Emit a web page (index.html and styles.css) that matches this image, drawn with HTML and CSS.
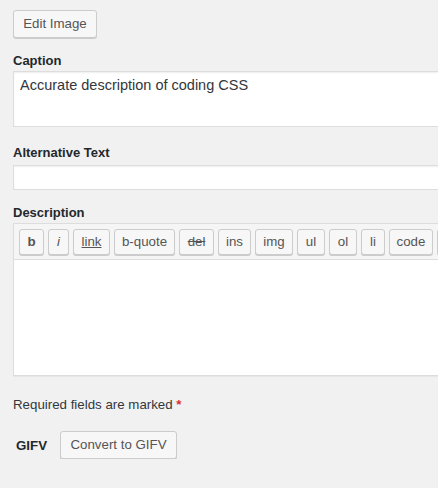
FILE: index.html
```html
<!DOCTYPE html>
<html>
<head>
<meta charset="utf-8">
<link rel="stylesheet" href="styles.css">
</head>
<body>
<div class="page">
  <button class="btn edit-btn">Edit Image</button>

  <div class="field field-caption">
    <label class="label">Caption</label>
    <div class="textarea caption">Accurate description of coding CSS</div>
  </div>

  <div class="field field-alt">
    <label class="label">Alternative Text</label>
    <div class="input"></div>
  </div>

  <div class="field field-desc">
    <label class="label">Description</label>
    <div class="editor">
      <div class="toolbar">
        <span class="qt w-b b">b</span>
        <span class="qt w-i i">i</span>
        <span class="qt w-link link">link</span>
        <span class="qt w-bq">b-quote</span>
        <span class="qt w-del del">del</span>
        <span class="qt w-ins">ins</span>
        <span class="qt w-img">img</span>
        <span class="qt w-ul">ul</span>
        <span class="qt w-ol">ol</span>
        <span class="qt w-li">li</span>
        <span class="qt w-code">code</span>
        <span class="qt w-more"></span>
      </div>
      <div class="editor-body"></div>
    </div>
  </div>

  <p class="required">Required fields are marked <span class="star">*</span></p>

  <div class="gifv">
    <span class="gifv-label">GIFV</span>
    <button class="btn convert-btn">Convert to GIFV</button>
  </div>
</div>
</body>
</html>
```

FILE: styles.css
```css
html, body {
  margin: 0;
  padding: 0;
  background: #f1f1f1;
  overflow: hidden;
}
body {
  font-family: "Liberation Sans", Arial, sans-serif;
  color: #32373c;
  font-size: 13.3px;
}
.page {
  padding: 10px 0 0 13px;
  width: 480px;
}
.btn {
  font-family: inherit;
  font-size: 13.3px;
  color: #555;
  background: #f7f7f7;
  border: 1px solid #cccccc;
  border-radius: 3px;
  box-shadow: 0 1px 0 #cccccc;
  padding: 0;
  height: 28px;
  line-height: 26px;
  cursor: pointer;
  display: block;
  text-align: center;
}
.edit-btn {
  width: 84px;
}
.label {
  display: block;
  font-weight: bold;
  font-size: 13px;
  line-height: 16px;
  color: #23282d;
}
.field-caption {
  margin-top: 15px;
}
.field-caption .label {
  margin-bottom: 2px;
}
.field-alt {
  margin-top: 18px;
}
.field-alt .label {
  margin-bottom: 4px;
}
.field-desc {
  margin-top: 15px;
}
.field-desc .label {
  margin-bottom: 2px;
}
.textarea, .input {
  background: #fff;
  border: 1px solid #dddddd;
  box-shadow: inset 0 1px 2px rgba(0,0,0,0.07);
  box-sizing: border-box;
}
.caption {
  height: 56px;
  padding: 4px 6px;
  font-size: 14.5px;
  line-height: 18px;
  color: #32373c;
}
.input {
  height: 25px;
}
.editor {
  border: 1px solid #dddddd;
  border-right: none;
  box-shadow: 0 1px 1px rgba(0,0,0,0.04);
  background: #fff;
}
.toolbar {
  background: #f5f5f5;
  display: flex;
  gap: 4px;
  padding: 5px 0 4px 5px;
  border-bottom: 1px solid #dddddd;
  white-space: nowrap;
  overflow: hidden;
}
.qt {
  flex: none;
  box-sizing: border-box;
  height: 26px;
  line-height: 24px;
  padding: 0;
  text-align: center;
  font-size: 13.3px;
  color: #555;
  background: #f7f7f7;
  border: 1px solid #cccccc;
  border-radius: 3px;
  box-shadow: 0 1px 0 #cccccc;
}
.qt.b { font-weight: bold; }
.qt.i { font-style: italic; }
.qt.link { text-decoration: underline; }
.qt.del { text-decoration: line-through; }
.w-b { width: 25px; }
.w-i { width: 21px; }
.w-link { width: 37px; }
.w-bq { width: 61px; }
.w-del { width: 35px; }
.w-ins { width: 33px; }
.w-img { width: 38px; }
.w-ul { width: 28px; }
.w-ol { width: 28px; }
.w-li { width: 24px; }
.w-code { width: 44px; }
.w-more { width: 44px; }
.editor-body {
  height: 115px;
}
.required {
  margin: 21px 0 0;
  line-height: 16px;
  color: #32373c;
}
.star {
  color: #dc3232;
  font-weight: bold;
}
.gifv {
  display: flex;
  align-items: center;
  margin-top: 18px;
}
.gifv-label {
  font-weight: bold;
  color: #23282d;
  padding-left: 3px;
  width: 44px;
}
.convert-btn {
  width: 117px;
}
```
